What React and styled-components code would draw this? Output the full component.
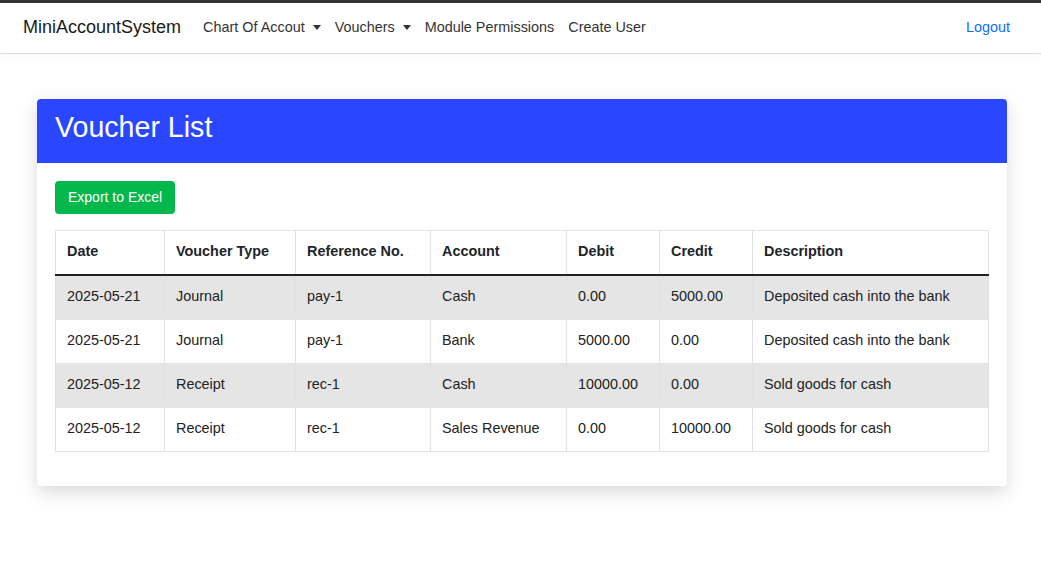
import React from 'react';
import styled, { createGlobalStyle } from 'styled-components';

const GlobalStyle = createGlobalStyle`
  html, body {
    margin: 0;
    padding: 0;
    background: #fff;
  }
  body {
    font-family: "Liberation Sans", Arial, sans-serif;
    font-size: 14.4px;
    color: #212529;
  }
  * { box-sizing: border-box; }
`;

const Navbar = styled.nav`
  display: flex;
  align-items: center;
  height: 54px;
  padding: 0 24px 2px 23px;
  border-top: 3px solid #343434;
  border-bottom: 1px solid #dedede;
  box-shadow: 0 1px 4px rgba(0, 0, 0, 0.05);
  background: #fff;
`;

const Brand = styled.a`
  font-size: 18px;
  color: #1a1a1a;
  text-decoration: none;
  margin-right: 15px;
`;

const NavList = styled.div`
  display: flex;
  align-items: center;
  flex: 1;
`;

const NavLink = styled.a`
  display: flex;
  align-items: center;
  padding: 8px 7px;
  font-size: 14.4px;
  color: ${(p) => (p.$primary ? '#0d6efd' : '#333')};
  text-decoration: none;
  margin-left: ${(p) => (p.$push ? 'auto' : '0')};
`;

const Caret = styled.span`
  display: inline-block;
  margin-left: 8px;
  border-top: 5px solid currentColor;
  border-left: 4px solid transparent;
  border-right: 4px solid transparent;
`;

const Page = styled.main`
  padding: 45px 34px 60px 37px;
`;

const Card = styled.section`
  background: #fff;
  border-radius: 4px;
  box-shadow: 0 6px 18px rgba(0, 0, 0, 0.15);
  overflow: hidden;
`;

const CardHeader = styled.header`
  background: #2a47ff;
  height: 64px;
  display: flex;
  align-items: center;
  padding: 0 18px 7px;
`;

const Title = styled.h3`
  margin: 0;
  color: #fff;
  font-size: 28.6px;
  font-weight: 400;
`;

const CardBody = styled.div`
  padding: 18px 18px 34px;
`;

const ExcelButton = styled.button`
  font-family: inherit;
  font-size: 14px;
  color: #fff;
  background: #02b84c;
  border: none;
  border-radius: 4px;
  height: 33px;
  padding: 0 13px 1px;
  margin-bottom: 16px;
`;

const Table = styled.table`
  width: 933px;
  border-collapse: collapse;
  table-layout: fixed;
  line-height: 21px;
`;

const Th = styled.th`
  text-align: left;
  font-weight: 700;
  padding: 10px 11px 12px;
  border: 1px solid #dfe3e7;
  border-bottom: 2px solid #222;
`;

const Row = styled.tr`
  background: ${(p) => (p.$striped ? '#e5e5e5' : '#fff')};
`;

const Td = styled.td`
  padding: 10px 11px 12px;
  border: 1px solid #dfe3e7;
  color: #222;
  white-space: nowrap;
`;

const columns = [
  { label: 'Date', width: 109 },
  { label: 'Voucher Type', width: 131 },
  { label: 'Reference No.', width: 135 },
  { label: 'Account', width: 136 },
  { label: 'Debit', width: 93 },
  { label: 'Credit', width: 93 },
  { label: 'Description', width: 236 },
];

const rows = [
  ['2025-05-21', 'Journal', 'pay-1', 'Cash', '0.00', '5000.00', 'Deposited cash into the bank'],
  ['2025-05-21', 'Journal', 'pay-1', 'Bank', '5000.00', '0.00', 'Deposited cash into the bank'],
  ['2025-05-12', 'Receipt', 'rec-1', 'Cash', '10000.00', '0.00', 'Sold goods for cash'],
  ['2025-05-12', 'Receipt', 'rec-1', 'Sales Revenue', '0.00', '10000.00', 'Sold goods for cash'],
];

export default function App() {
  return (
    <>
      <GlobalStyle />
      <Navbar>
        <Brand href="#">MiniAccountSystem</Brand>
        <NavList>
          <NavLink href="#">Chart Of Accout<Caret /></NavLink>
          <NavLink href="#">Vouchers<Caret /></NavLink>
          <NavLink href="#">Module Permissions</NavLink>
          <NavLink href="#">Create User</NavLink>
          <NavLink href="#" $primary $push>Logout</NavLink>
        </NavList>
      </Navbar>

      <Page>
        <Card>
          <CardHeader>
            <Title>Voucher List</Title>
          </CardHeader>
          <CardBody>
            <ExcelButton>Export to Excel</ExcelButton>
            <Table>
              <colgroup>
                {columns.map((c) => (
                  <col key={c.label} style={{ width: c.width }} />
                ))}
              </colgroup>
              <thead>
                <tr>
                  {columns.map((c) => (
                    <Th key={c.label}>{c.label}</Th>
                  ))}
                </tr>
              </thead>
              <tbody>
                {rows.map((r, i) => (
                  <Row key={i} $striped={i % 2 === 0}>
                    {r.map((cell, j) => (
                      <Td key={j}>{cell}</Td>
                    ))}
                  </Row>
                ))}
              </tbody>
            </Table>
          </CardBody>
        </Card>
      </Page>
    </>
  );
}
